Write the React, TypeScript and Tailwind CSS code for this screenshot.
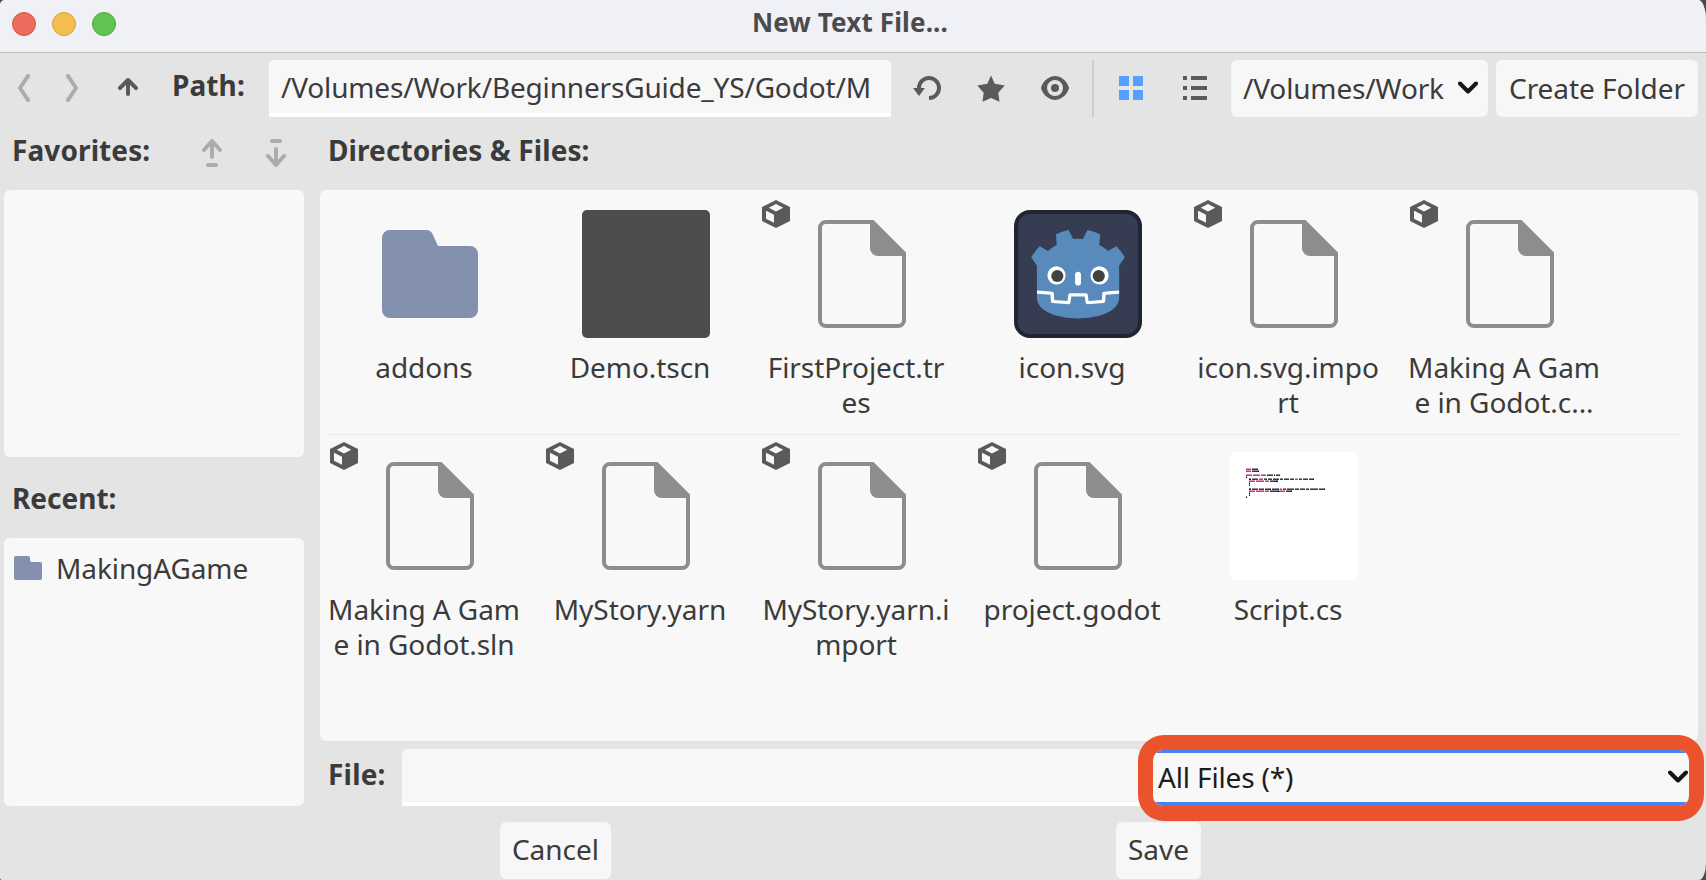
import React from "react";

const cube =
  "M8 1 1 4.500v7L8 15l7-3.500v-7zm0 2 3.600 1.900L8 6.800 4.400 4.900zM3 6.400l4 2v4l-4-2z";

function Cube() {
  return (
    <svg className="absolute left-0 top-0 h-8 w-8" viewBox="0 0 16 16">
      <path fill="#5a5a5a" fillRule="evenodd" d={cube} />
    </svg>
  );
}

function FolderBig() {
  return (
    <svg className="h-32 w-32" viewBox="0 0 128 128">
      <path
        fill="#8390b0"
        d="M16 28a8 8 0 0 1 8-8h36c3 0 5 1 6.500 4L72 36h32a8 8 0 0 1 8 8v56a8 8 0 0 1-8 8H24a8 8 0 0 1-8-8z"
      />
    </svg>
  );
}

function FileBig() {
  return (
    <svg className="h-32 w-32" viewBox="0 0 128 128">
      <path
        fill="#8d8d8d"
        fillRule="evenodd"
        d="M28 10a8 8 0 0 0-8 8v92a8 8 0 0 0 8 8h72a8 8 0 0 0 8-8V42.500L75.500 10zm0 4h44v24a8 8 0 0 0 8 8h24v64a4 4 0 0 1-4 4H28a4 4 0 0 1-4-4V18a4 4 0 0 1 4-4z"
      />
    </svg>
  );
}

function GodotLogo() {
  return (
    <svg className="h-32 w-32" viewBox="0 0 128 128">
      <rect width="124" height="124" x="2" y="2" fill="#363d52" stroke="#212532" strokeWidth="4" rx="14" />
      <g fill="#fff" transform="translate(12.322 12.322)scale(.101)">
        <path d="M105 673v33q407 354 814 0v-33z" />
        <path
          fill="#588bbc"
          d="m105 673 152 14q12 1 15 14l4 67 132 10 8-61q2-11 15-15h162q13 4 15 15l8 61 132-10 4-67q3-13 15-14l152-14V427q30-39 56-81-35-59-83-108-43 20-82 47-40-37-88-64 7-51 8-102-59-28-123-42-26 43-46 89-49-7-98 0-20-46-46-89-64 14-123 42 1 51 8 102-48 27-88 64-39-27-82-47-48 49-83 108 26 42 56 81zm0 33v39c0 276 813 276 814 0v-39l-134 12-5 69q-2 10-14 13l-162 11q-12 0-16-11l-10-65H446l-10 65q-4 11-16 11l-162-11q-12-3-14-13l-5-69z"
        />
        <path d="M483 600c0 34 58 34 58 0v-86c0-34-58-34-58 0z" />
        <circle cx="725" cy="526" r="90" />
        <circle cx="299" cy="526" r="90" />
      </g>
      <g fill="#414042" transform="translate(12.322 12.322)scale(.101)">
        <circle cx="307" cy="532" r="60" />
        <circle cx="717" cy="532" r="60" />
      </g>
    </svg>
  );
}

const P = "#c9387c";
const D = "#3a3a3a";
const B = "#00008a";
const V = "#b03ac4";

/* Each source line: top offset, then [colour, start, end] runs. */
const codeLines: [number, [string, number, number][]][] = [
  [16, [[P, 16, 21], [D, 22, 28]]],
  [18, [[P, 16, 21], [D, 22, 28], [B, 28, 29]]],
  [22, [[P, 16, 22], [P, 23, 30], [P, 31, 36], [D, 37, 43], [B, 44, 45], [D, 46, 50]]],
  [24, [[B, 16, 17]]],
  [26, [[B, 19, 21], [D, 22, 28], [P, 29, 33], [D, 34, 37], [D, 38, 42], [D, 43, 49], [D, 50, 53], [D, 54, 59], [D, 60, 64], [V, 65, 68], [D, 69, 72], [D, 73, 78], [D, 79, 83], [B, 83, 84]]],
  [28, [[P, 19, 25], [P, 26, 34], [P, 35, 39], [D, 40, 46], [B, 46, 48]]],
  [30, [[B, 19, 20]]],
  [32, [[B, 19, 20]]],
  [36, [[B, 19, 21], [D, 22, 28], [D, 29, 34], [D, 35, 40], [B, 40, 41], [D, 42, 48], [B, 48, 49], [P, 50, 52], [D, 53, 56], [D, 57, 64], [D, 65, 69], [D, 70, 75], [D, 76, 79], [D, 80, 88], [D, 89, 94], [B, 94, 95]]],
  [38, [[P, 19, 25], [P, 26, 34], [P, 35, 39], [D, 40, 48], [B, 48, 49], [P, 49, 55], [D, 56, 61], [B, 61, 62]]],
  [40, [[B, 19, 20]]],
  [42, [[B, 19, 20]]],
  [44, [[B, 16, 17]]],
];

function ScriptPreview() {
  return (
    <svg className="h-32 w-32 rounded-[5px] bg-white" viewBox="0 0 128 128" shapeRendering="crispEdges">
      {codeLines.map(([y, runs]) =>
        runs.map(([c, a, b]) => (
          <g key={y + "-" + a} fill={c}>
            <rect x={a} y={y} width={b - a} height="1" opacity={0.55} />
            <rect x={a} y={y + 1} width={b - a} height="1" />
          </g>
        )),
      )}
    </svg>
  );
}

function Chevron() {
  return (
    <svg className="h-3.5 w-5 shrink-0" viewBox="0 0 20 14" fill="none" stroke="#151515" strokeWidth="4" strokeLinecap="round" strokeLinejoin="round">
      <path d="m2 2.500 8 8 8-8" />
    </svg>
  );
}

type Entry = { kind: "folder" | "scene" | "file" | "logo" | "script"; lines: string[] };

const entries: Entry[] = [
  { kind: "folder", lines: ["addons"] },
  { kind: "scene", lines: ["Demo.tscn"] },
  { kind: "file", lines: ["FirstProject.tr", "es"] },
  { kind: "logo", lines: ["icon.svg"] },
  { kind: "file", lines: ["icon.svg.impo", "rt"] },
  { kind: "file", lines: ["Making A Gam", "e in Godot.c..."] },
  { kind: "file", lines: ["Making A Gam", "e in Godot.sln"] },
  { kind: "file", lines: ["MyStory.yarn"] },
  { kind: "file", lines: ["MyStory.yarn.i", "mport"] },
  { kind: "file", lines: ["project.godot"] },
  { kind: "script", lines: ["Script.cs"] },
];

function Item({ entry }: { entry: Entry }) {
  return (
    <div className="relative h-[242px] w-[216px] pt-[12px]">
      <div className="ml-[38px] h-32 w-32">
        {entry.kind === "folder" && <FolderBig />}
        {entry.kind === "scene" && <div className="h-32 w-32 rounded-[5px] bg-[#4d4d4d]" />}
        {entry.kind === "file" && <FileBig />}
        {entry.kind === "logo" && <GodotLogo />}
        {entry.kind === "script" && <ScriptPreview />}
      </div>
      {entry.kind === "file" && <Cube />}
      <div className="mt-[12px] w-[192px] text-center leading-[35px] tracking-[-0.06px] whitespace-pre">
        {entry.lines.map((l) => (
          <div key={l}>{l}</div>
        ))}
      </div>
    </div>
  );
}

export default function App() {
  return (
    <div className="h-[880px] w-[1706px] overflow-hidden bg-[#4a4a4a] font-['Noto_Sans',sans-serif] text-[28px] text-[#3b3b3b]">
      <div className="flex h-full flex-col overflow-hidden rounded-tl-[5px] rounded-tr-[8px_20px] rounded-br-[7px_17px] rounded-bl-[2px] bg-[#e4e4e4]">
        <header className="relative flex h-[53px] shrink-0 items-center gap-4 border-b border-[#bcbcbc] bg-[#f0f1f7] pb-1 pl-3">
          <span className="h-6 w-6 rounded-full border border-[#d1564c] bg-[#ec6a5e]" />
          <span className="h-6 w-6 rounded-full border border-[#d8a03d] bg-[#f5bf4f]" />
          <span className="h-6 w-6 rounded-full border border-[#4fa73e] bg-[#61c554]" />
          <h1 className="absolute inset-x-0 top-[5px] pr-[6px] text-center text-[26px] leading-[34px] font-bold tracking-[0.15px] text-[#4b4b4d]">New Text File...</h1>
        </header>

        <div className="mt-[7px] flex h-[57px] shrink-0 items-center pl-2">
          <div className="-mt-px flex w-[164px] items-center text-[#acacac]">
            <svg className="mr-4 h-8 w-8 shrink-0" viewBox="0 0 32 32" fill="none" stroke="currentColor" strokeWidth="4" strokeLinecap="round" strokeLinejoin="round">
              <path d="M20 4l-8 12 8 12" />
            </svg>
            <svg className="mr-6 h-8 w-8 shrink-0" viewBox="0 0 32 32" fill="none" stroke="currentColor" strokeWidth="4" strokeLinecap="round" strokeLinejoin="round">
              <path d="M12 4l8 12-8 12" />
            </svg>
            <svg className="h-8 w-8 shrink-0" viewBox="0 0 32 32" fill="none" stroke="#5a5a5a" strokeWidth="4" strokeLinecap="round" strokeLinejoin="round">
              <path d="M8 16l8-8 8 8M16 9v13" />
            </svg>
          </div>
          <span className="-mt-2 w-[97px] font-bold tracking-[0.1px]">Path:</span>
          <div className="flex h-[57px] w-[622px] items-center rounded-t-[5px] border-b-4 border-white bg-[#f7f7f7] pl-3 tracking-[-0.17px] whitespace-pre">
            <span>/Volumes/Work/BeginnersGuide_YS/Godot/M</span>
          </div>
          <div className="-mt-px ml-[20px] flex items-center gap-8">
            <svg className="h-8 w-8" viewBox="0 0 16 16">
              <path fill="none" stroke="#5a5a5a" strokeWidth="2" d="M4 8.500V8a5 5 0 1 1 5 5" />
              <path fill="#5a5a5a" d="M1 8h6l-3 4z" />
            </svg>
            <svg className="h-8 w-8" viewBox="0 0 32 32">
              <path fill="#5a5a5a" d="M16 3.500 19.700 11.700 29.700 13.500 23.300 20.800 24.500 29.700 16 26 7.500 29.700 8.700 20.800 2.300 13.500 12.300 11.700z" />
            </svg>
            <svg className="h-8 w-8" viewBox="0 0 16 16">
              <path
                fill="#5a5a5a"
                fillRule="evenodd"
                d="M8 2C5.400 2 2.200 3.950 1.050 7.700a1 1 0 0 0 0 .6C2.200 12.020 5.550 14 8 14s5.800-1.980 6.950-5.700a1 1 0 0 0 0-.6C13.820 3.940 10.600 2 8 2zm0 2a4 4 0 1 1 0 8 4 4 0 0 1 0-8zm0 2a2 2 0 1 0 0 4 2 2 0 0 0 0-4z"
              />
            </svg>
          </div>
          <div className="ml-[21px] h-[57px] w-[2px] bg-[#cdcdcd]" />
          <svg className="-mt-px ml-[21px] h-8 w-8" viewBox="0 0 32 32" fill="#569eff">
            <path d="M4 4h10v10H4zM18 4h10v10H18zM4 18h10v10H4zM18 18h10v10H18z" />
          </svg>
          <svg className="-mt-px ml-8 h-8 w-8" viewBox="0 0 32 32" fill="#5a5a5a">
            <path d="M4 4h4v4H4zM12 4h16v4H12zM4 14h4v4H4zM12 14h16v4H12zM4 24h4v4H4zM12 24h16v4H12z" />
          </svg>
          <button className="ml-5 flex h-[57px] w-[257px] items-center justify-between rounded-[6px] bg-[#f7f7f7] pr-[10px] pb-[2px] pl-3 tracking-[-0.15px] whitespace-pre">
            <span>/Volumes/Work</span>
            <Chevron />
          </button>
          <button className="ml-2 h-[57px] w-[202px] rounded-[6px] bg-[#f7f7f7] pb-[2px] text-center tracking-[-0.05px] whitespace-pre">Create Folder</button>
        </div>

        <main className="flex h-[689px] shrink-0 gap-4 pr-2 pl-1">
          <aside className="flex w-[300px] flex-col">
            <div className="flex h-[73px] shrink-0 items-center pb-[5px] pl-2">
              <span className="-mt-[2px] w-[184px] font-bold tracking-[0.1px]">Favorites:</span>
              <svg className="h-8 w-8" viewBox="0 0 32 32" fill="none" stroke="#acacac" strokeWidth="4" strokeLinecap="round" strokeLinejoin="round">
                <path d="M8 15l8-9 8 9M16 7v15M12 30h8" />
              </svg>
              <svg className="ml-8 h-8 w-8" viewBox="0 0 32 32" fill="none" stroke="#acacac" strokeWidth="4" strokeLinecap="round" strokeLinejoin="round">
                <path d="M8 21l8 9 8-9M16 14v15M12 6h8" />
              </svg>
            </div>
            <div className="h-[267px] shrink-0 rounded-[6px] bg-[#f8f8f8]" />
            <div className="h-[81px] shrink-0 pt-[22px] pl-2 leading-[38px] font-bold">Recent:</div>
            <div className="flex h-[268px] shrink-0 items-start gap-[14px] rounded-[6px] bg-[#f8f8f8] pt-[11px] pl-[10px]">
              <svg className="mt-[7px] h-6 w-7" viewBox="0 0 28 24">
                <path fill="#8390b0" d="M0 2a2 2 0 0 1 2-2h12a2 2 0 0 1 2 2v2a2 2 0 0 0 2 2h8a2 2 0 0 1 2 2v14a2 2 0 0 1-2 2H2a2 2 0 0 1-2-2z" />
              </svg>
              <span className="leading-[38px] tracking-[-0.1px]">MakingAGame</span>
            </div>
          </aside>

          <section className="flex w-[1378px] flex-col">
            <h2 className="h-[73px] shrink-0 pt-[14px] pl-2 leading-[38px] font-bold tracking-[0.1px]">Directories &amp; Files:</h2>
            <div className="relative h-[551px] shrink-0 rounded-[6px] bg-[#f8f8f8] pt-2 pl-2">
              <div className="absolute top-[244px] right-4 left-2 h-px bg-[#ebebeb]" />
              <div className="flex w-[1300px] flex-wrap">
                {entries.map((e, i) => (
                  <Item key={i} entry={e} />
                ))}
              </div>
            </div>
            <div className="mt-2 flex h-[57px] shrink-0">
              <span className="w-[82px] pt-[6px] pl-2 leading-[38px] font-bold tracking-[0.2px]">File:</span>
              <div className="h-[57px] w-[738px] rounded-t-[5px] border-b-4 border-white bg-[#f7f7f7]" />
              <div className="relative z-10 -mt-[14px] -mr-[6px] -ml-[2px] h-[86px] w-[566px] shrink-0 rounded-[26px] bg-[#eb532d] p-[15px]">
                <div className="h-[56px] overflow-hidden rounded-[10px]">
                  <div className="flex h-[56px] items-center justify-between border-t-[3px] border-b-4 border-[#4a80f0] bg-[#f8f8f8] pr-px pb-[2px] pl-[5px] tracking-[-0.15px] text-[#1c1c1c]">
                    <span>All Files (*)</span>
                    <Chevron />
                  </div>
                </div>
              </div>
            </div>
          </section>
        </main>

        <footer className="mt-4 flex h-[57px] shrink-0 pl-[500px]">
          <button className="h-[57px] w-[111px] rounded-[6px] bg-[#f7f7f7] pb-[3px]">Cancel</button>
          <button className="ml-[505px] h-[57px] w-[85px] rounded-[6px] bg-[#f7f7f7] pb-[3px]">Save</button>
        </footer>
      </div>
    </div>
  );
}
